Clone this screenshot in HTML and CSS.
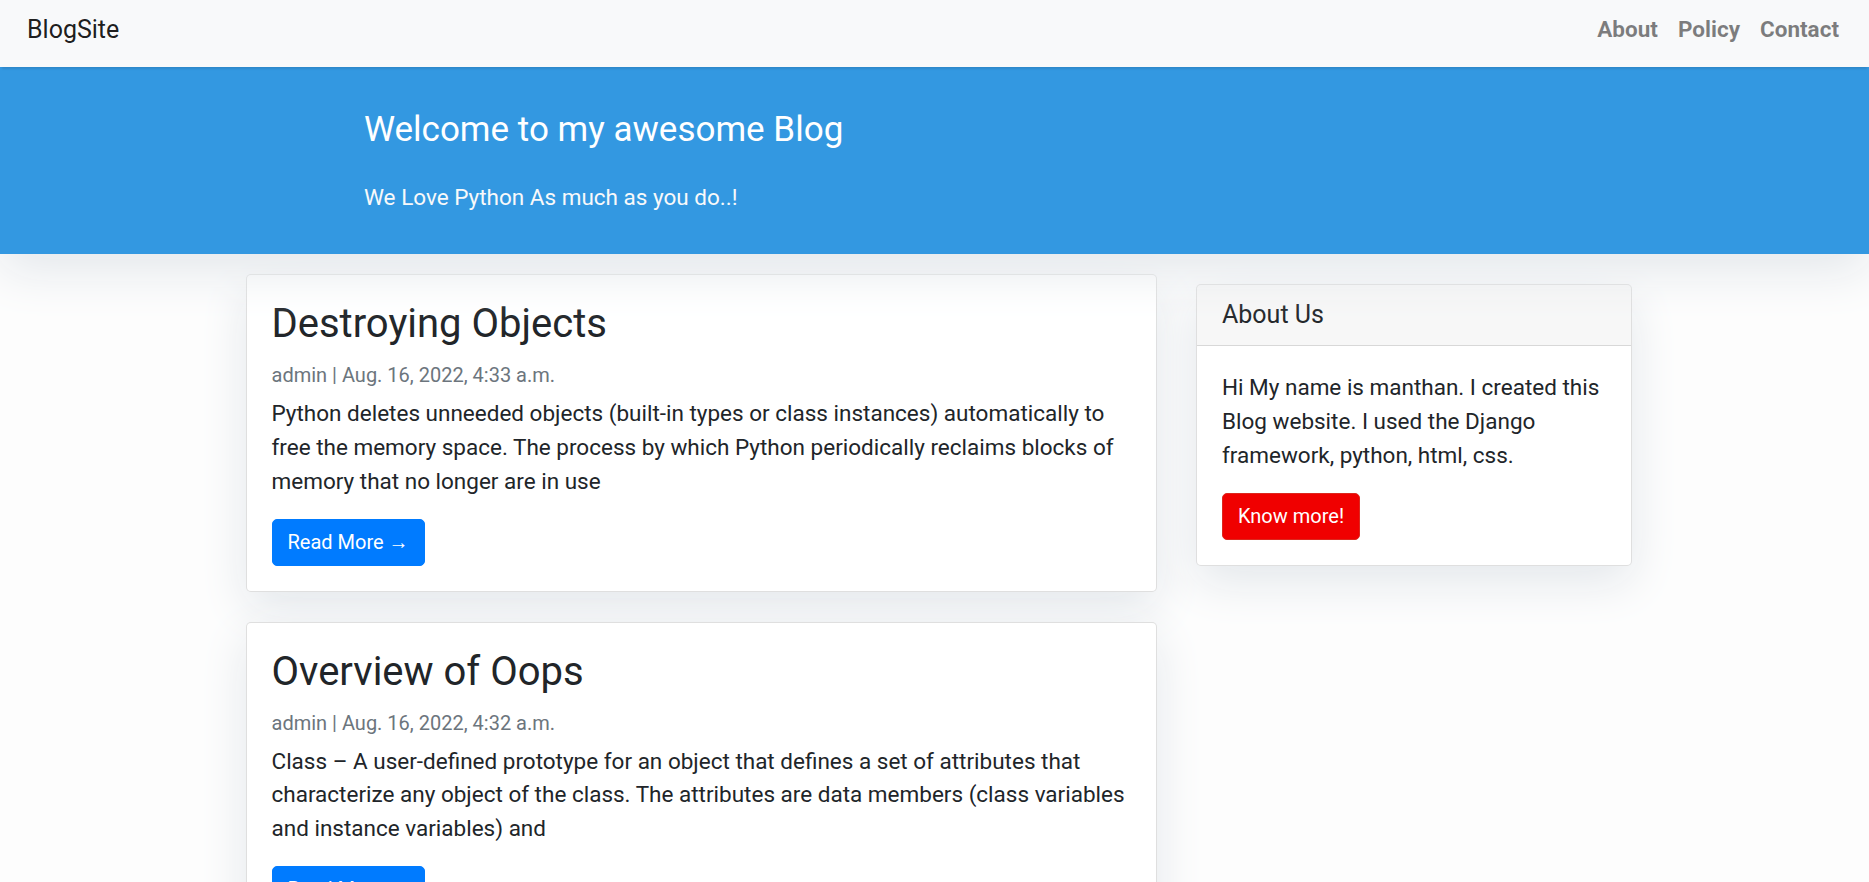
FILE: index.html
```html
<!DOCTYPE html>
<html lang="en">
<head>
<meta charset="utf-8">
<title>BlogSite</title>
<link rel="stylesheet" href="styles.css">
</head>
<body>
<nav class="navbar">
  <a class="brand" href="#">BlogSite</a>
  <ul class="nav-links">
    <li><a class="nav-link" href="#">About</a></li>
    <li><a class="nav-link" href="#">Policy</a></li>
    <li><a class="nav-link" href="#">Contact</a></li>
  </ul>
</nav>

<header class="masthead">
  <div class="container">
    <div class="site-heading">
      <h3 class="heading">Welcome to my awesome Blog</h3>
      <p class="tagline">We Love Python As much as you do..!</p>
    </div>
  </div>
</header>

<div class="container">
  <div class="layout">
    <div class="posts">
      <div class="card">
        <div class="card-body">
          <h2 class="card-title">Destroying Objects</h2>
          <p class="meta">admin | Aug. 16, 2022, 4:33 a.m.</p>
          <p class="card-text">Python deletes unneeded objects (built-in types or class instances) automatically to free the memory space. The process by which Python periodically reclaims blocks of memory that no longer are in use</p>
          <a href="#" class="btn btn-primary">Read More &rarr;</a>
        </div>
      </div>
      <div class="card">
        <div class="card-body">
          <h2 class="card-title">Overview of Oops</h2>
          <p class="meta">admin | Aug. 16, 2022, 4:32 a.m.</p>
          <p class="card-text">Class – A user-defined prototype for an object that defines a set of attributes that characterize any object of the class. The attributes are data members (class variables and instance variables) and</p>
          <a href="#" class="btn btn-primary">Read More &rarr;</a>
        </div>
      </div>
    </div>
    <aside class="sidebar">
      <div class="card side-card">
        <h5 class="card-header">About Us</h5>
        <div class="card-body">
          <p class="card-text">Hi My name is manthan. I created this Blog website. I used the Django framework, python, html, css.</p>
          <a href="#" class="btn btn-danger">Know more!</a>
        </div>
      </div>
    </aside>
  </div>
</div>
</body>
</html>
```

FILE: styles.css
```css
* {
  box-sizing: border-box;
}

html, body {
  margin: 0;
  padding: 0;
}

body {
  font-family: Roboto, "Liberation Sans", sans-serif;
  font-size: 22.5px;
  line-height: 1.5;
  color: #212529;
  background-color: #fdfdfd;
  overflow: hidden;
}

a {
  text-decoration: none;
}

/* Navbar */
.navbar {
  position: relative;
  z-index: 2;
  height: 67px;
  display: flex;
  align-items: flex-start;
  justify-content: space-between;
  padding: 11px 20px 0 27px;
  background-color: #f8f9fa;
  box-shadow: 0 4px 2px -2px rgba(0, 0, 0, 0.1);
}

.brand {
  font-size: 25px;
  line-height: 37.5px;
  color: rgba(0, 0, 0, 0.9);
}

.nav-links {
  list-style: none;
  display: flex;
  margin: 2px 0 0;
  padding: 0;
}

.nav-link {
  display: block;
  padding: 0 10px;
  font-size: 22.5px;
  line-height: 33.75px;
  font-weight: 700;
  color: rgba(0, 0, 0, 0.5);
}

/* Masthead */
.masthead {
  position: relative;
  z-index: 1;
  background: #3398E1;
  padding-top: 22px;
  padding-bottom: 19.5px;
  box-shadow: 0 16px 48px #E3E7EB;
}

.container {
  width: 1394px;
  margin: 0 auto;
  padding-left: 8px;
}

.site-heading {
  padding-left: 118.5px;
}

.heading {
  margin: 20px 0 30px;
  font-size: 35px;
  font-weight: 400;
  line-height: 1.2;
  color: #fff;
}

.tagline {
  margin: 0 0 20px;
  color: #f8f9fa;
}

/* Layout */
.layout {
  display: flex;
  align-items: flex-start;
  gap: 39.5px;
}

.posts {
  width: 911px;
  margin-top: 20px;
}

.sidebar {
  width: 435.5px;
  margin-top: 30px;
}

/* Cards */
.card {
  background-color: #fff;
  border: 1px solid rgba(0, 0, 0, 0.125);
  border-radius: 5px;
  box-shadow: 0 16px 48px #E3E7EB;
  margin-bottom: 30px;
}

.card-body {
  padding: 25px;
}

.card-title {
  margin: 0 0 15px;
  font-size: 40px;
  font-weight: 400;
  line-height: 1.2;
}

.meta {
  margin: 0 0 10px;
  font-size: 20px;
  font-weight: 400;
  line-height: 1.2;
  color: #6c757d;
}

.card-text {
  margin: 0 0 20px;
}

.card-header {
  margin: 0;
  padding: 15px 25px;
  font-size: 25px;
  font-weight: 400;
  line-height: 1.2;
  background-color: rgba(0, 0, 0, 0.03);
  border-bottom: 1px solid rgba(0, 0, 0, 0.125);
  border-radius: 4px 4px 0 0;
}

/* Buttons */
.btn {
  display: inline-block;
  padding: 7.5px 15px;
  font-size: 20px;
  line-height: 30px;
  border: 1px solid transparent;
  border-radius: 5px;
  color: #fff;
}

.btn-primary {
  background-color: #007bff;
  border-color: #007bff;
}

.btn-danger {
  background-color: #f00000;
  border-color: #dc281e;
}
```
